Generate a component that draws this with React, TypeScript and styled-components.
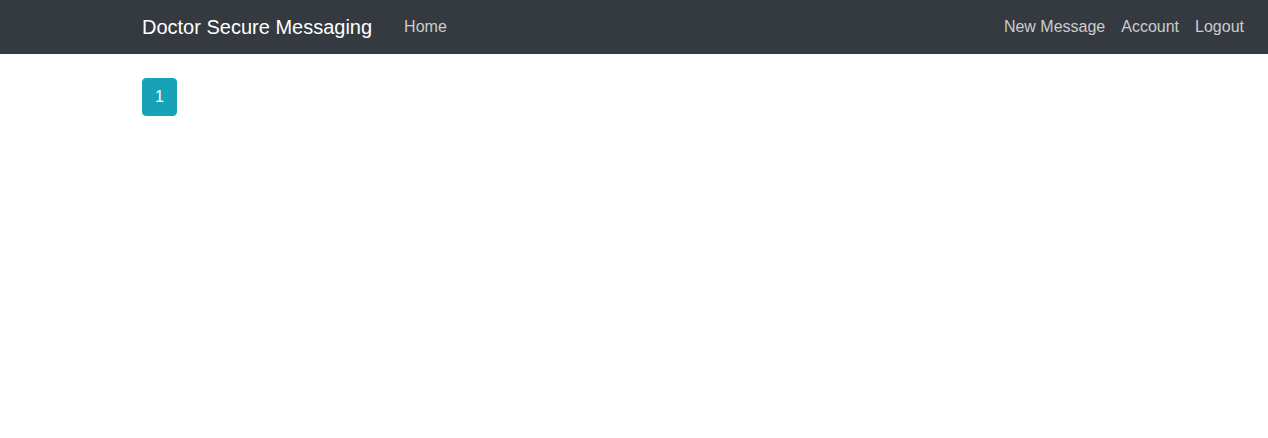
import styled, { createGlobalStyle } from "styled-components";

const GlobalStyle = createGlobalStyle`
  body {
    margin: 0;
    font-family: "Liberation Sans", Arial, sans-serif;
    font-size: 16px;
    line-height: 1.5;
    color: #212529;
    background: #fff;
  }
`;

const Navbar = styled.nav`
  height: 54px;
  background-color: #343a40;
  display: flex;
  align-items: center;
  padding: 0 16px 0 142px;
  box-sizing: border-box;
`;

const Brand = styled.a`
  font-size: 20px;
  line-height: 30px;
  color: #fff;
  text-decoration: none;
  margin-right: 24px;
  white-space: nowrap;
`;

const NavList = styled.ul<{ $right?: boolean }>`
  display: flex;
  list-style: none;
  margin: 0;
  padding: 0;
  margin-left: ${(p) => (p.$right ? "auto" : "0")};
`;

const NavLink = styled.a`
  display: block;
  padding: 8px;
  color: rgba(255, 255, 255, 0.75);
  text-decoration: none;
  font-size: 16px;
  line-height: 24px;
`;

const Main = styled.main`
  padding: 24px 142px;
`;

const PageButton = styled.button`
  font-family: inherit;
  font-size: 16px;
  line-height: 24px;
  padding: 6px 12px;
  color: #fff;
  background-color: #17a2b8;
  border: 1px solid #17a2b8;
  border-radius: 4px;
  cursor: pointer;
`;

export default function App() {
  return (
    <>
      <GlobalStyle />
      <Navbar>
        <Brand href="#">Doctor Secure Messaging</Brand>
        <NavList>
          <li><NavLink href="#">Home</NavLink></li>
        </NavList>
        <NavList $right>
          <li><NavLink href="#">New Message</NavLink></li>
          <li><NavLink href="#">Account</NavLink></li>
          <li><NavLink href="#">Logout</NavLink></li>
        </NavList>
      </Navbar>
      <Main>
        <PageButton>1</PageButton>
      </Main>
    </>
  );
}
